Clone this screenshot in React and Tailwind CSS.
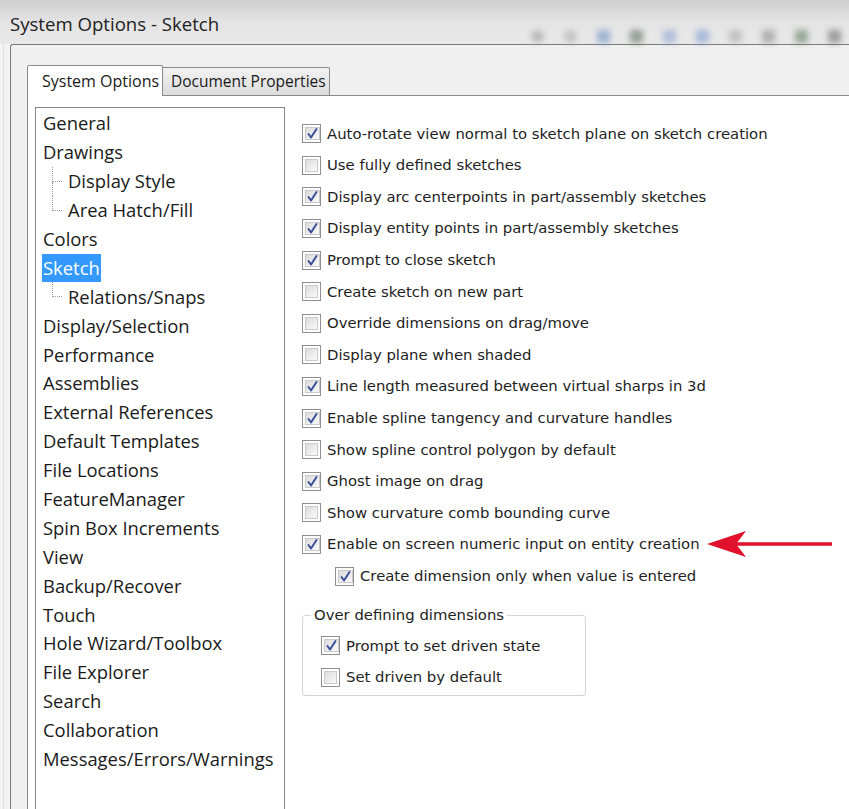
import React from 'react'

const navItems = [
    { label: 'General' },
    { label: 'Drawings' },
    { label: 'Display Style', child: true },
    { label: 'Area Hatch/Fill', child: true, last: true },
    { label: 'Colors' },
    { label: 'Sketch', selected: true },
    { label: 'Relations/Snaps', child: true, last: true },
    { label: 'Display/Selection' },
    { label: 'Performance' },
    { label: 'Assemblies' },
    { label: 'External References' },
    { label: 'Default Templates' },
    { label: 'File Locations' },
    { label: 'FeatureManager' },
    { label: 'Spin Box Increments' },
    { label: 'View' },
    { label: 'Backup/Recover' },
    { label: 'Touch' },
    { label: 'Hole Wizard/Toolbox' },
    { label: 'File Explorer' },
    { label: 'Search' },
    { label: 'Collaboration' },
    { label: 'Messages/Errors/Warnings' },
]

const options = [
    { label: 'Auto-rotate view normal to sketch plane on sketch creation', checked: true },
    { label: 'Use fully defined sketches', checked: false },
    { label: 'Display arc centerpoints in part/assembly sketches', checked: true },
    { label: 'Display entity points in part/assembly sketches', checked: true },
    { label: 'Prompt to close sketch', checked: true },
    { label: 'Create sketch on new part', checked: false },
    { label: 'Override dimensions on drag/move', checked: false },
    { label: 'Display plane when shaded', checked: false },
    { label: 'Line length measured between virtual sharps in 3d', checked: true },
    { label: 'Enable spline tangency and curvature handles', checked: true },
    { label: 'Show spline control polygon by default', checked: false },
    { label: 'Ghost image on drag', checked: true },
    { label: 'Show curvature comb bounding curve', checked: false },
    { label: 'Enable on screen numeric input on entity creation', checked: true },
]

const uiFont = { fontFamily: '"Open Sans", "Noto Sans", sans-serif' }
const optFont = { fontFamily: '"DejaVu Sans", Verdana, sans-serif' }

function Checkbox({ checked }) {
    return (
        <span className="w-[19px] h-[19px] shrink-0 border border-[#8f8f8f] bg-white p-[2px] flex">
            <span className="flex-1 border border-[#c9c9c9] bg-gradient-to-br from-[#dcdcdc] to-[#fafafa] flex items-center justify-center">
                {checked && (
                    <svg width="13" height="13" viewBox="0 0 13 13">
                        <path d="M2.5 7 L5 10.5 L10.5 2" fill="none" stroke="#3b4f9a" strokeWidth="2" strokeLinecap="round" strokeLinejoin="round" />
                    </svg>
                )}
            </span>
        </span>
    )
}

function OptionRow({ label, checked, className = '' }) {
    return (
        <div className={`h-[31.6px] flex items-center gap-[6px] ${className}`}>
            <Checkbox checked={checked} />
            <span className="text-[14.85px] text-[#1e1e1e] whitespace-nowrap" style={optFont}>{label}</span>
        </div>
    )
}

function TreeConnector({ last }) {
    return (
        <div className="w-[10px] ml-[10px] mr-[5px] self-stretch flex flex-col">
            <div className="flex-1 border-l border-b border-dotted border-[#9a9a9a]" />
            <div className={`flex-1 ${last ? '' : 'border-l border-dotted border-[#9a9a9a]'}`} />
        </div>
    )
}

function NavRow({ item }) {
    return (
        <div className="h-[28.9px] flex items-stretch">
            {item.child && <TreeConnector last={item.last} />}
            <span className="flex items-center">
                <span
                    className={`px-[1px] leading-[28px] text-[18.4px] whitespace-nowrap ${item.selected ? 'bg-[#3399ff] text-white' : 'text-[#1a1a1a]'}`}
                    style={uiFont}
                >
                    {item.label}
                </span>
            </span>
        </div>
    )
}

export default function App() {
    return (
        <div className="w-[849px] h-[809px] overflow-hidden relative bg-[#f3f3f3] flex flex-col">
            {/* title bar */}
            <div className="h-[44px] shrink-0 relative bg-gradient-to-b from-[#cfcfcf] via-[#e4e4e4] to-[#e9e9e9] flex items-center pl-[10px]">
                <span className="text-[18.6px] text-[#222] pt-[3px]" style={uiFont}>System Options - Sketch</span>
                <div className="absolute right-[8px] top-[30px] flex gap-[20px] blur-[3px] opacity-60">
                    <span className="w-[13px] h-[13px] rounded-full bg-[#9a9a9a]" />
                    <span className="w-[13px] h-[13px] rounded-full bg-[#a8a8a8]" />
                    <span className="w-[13px] h-[13px] bg-[#6d8fc4]" />
                    <span className="w-[13px] h-[13px] bg-[#5c6a5c]" />
                    <span className="w-[13px] h-[13px] bg-[#8aa3d0]" />
                    <span className="w-[13px] h-[13px] bg-[#7d9ad0]" />
                    <span className="w-[13px] h-[13px] bg-[#aaaaaa]" />
                    <span className="w-[13px] h-[13px] bg-[#8a8a8a]" />
                    <span className="w-[13px] h-[13px] bg-[#5f7a5f]" />
                    <span className="w-[13px] h-[13px] bg-[#6a6a6a]" />
                </div>
            </div>

            <div className="flex-1 flex min-h-0">
                <div className="w-[10px] shrink-0 flex">
                    <div className="w-[3px]" />
                    <div className="w-px bg-[#dedede]" />
                </div>

                {/* dialog frame */}
                <div className="flex-1 flex flex-col border-t border-l border-[#7a7a7a] rounded-tl-[3px] bg-[#f0f0f0] pl-[16px] pt-[19px]">
                    {/* tabs */}
                    <div className="h-[31px] flex items-end relative z-10" style={uiFont}>
                        <div className="w-[136px] h-[31px] -mb-px bg-white border border-b-0 border-[#898989] rounded-t-[2px] pl-[14px] flex items-center text-[16px] text-[#1a1a1a] whitespace-nowrap">
                            System Options
                        </div>
                        <div className="w-[167px] h-[28px] bg-gradient-to-b from-[#f2f2f2] to-[#dcdcdc] border border-l-0 border-b-0 border-[#898989] rounded-tr-[2px] pl-[8px] flex items-center text-[15.5px] text-[#1a1a1a] whitespace-nowrap">
                            Document Properties
                        </div>
                    </div>

                    {/* tab panel */}
                    <div className="flex-1 flex min-h-0 bg-white border-t border-l border-[#898989] pl-[7px] pt-[11px]">
                        {/* category list */}
                        <div className="w-[250px] shrink-0 border border-b-0 border-[#828790] pl-[6px] pt-[1px] flex flex-col">
                            {navItems.map((item) => (
                                <NavRow key={item.label} item={item} />
                            ))}
                        </div>

                        {/* options */}
                        <div className="flex-1 pl-[17px] pt-[11px] flex flex-col relative">
                            {options.map((o) => (
                                <OptionRow key={o.label} label={o.label} checked={o.checked} />
                            ))}
                            <OptionRow
                                label="Create dimension only when value is entered"
                                checked
                                className="pl-[33px]"
                            />

                            <fieldset className="mt-[12px] w-[284px] border border-[#d5d5d5] rounded-[3px] pl-[18px] pt-[4px] pb-[2px]">
                                <legend className="-ml-[10px] px-[3px] text-[14.85px] text-[#1e1e1e]" style={optFont}>
                                    Over defining dimensions
                                </legend>
                                <OptionRow label="Prompt to set driven state" checked />
                                <OptionRow label="Set driven by default" checked={false} />
                            </fieldset>
                        </div>
                    </div>
                </div>
            </div>

            {/* red annotation arrow */}
            <svg className="absolute left-[704px] top-[528px]" width="132" height="32" viewBox="0 0 132 32">
                <line x1="30" y1="16" x2="128" y2="16" stroke="#e3122c" strokeWidth="3.5" />
                <path d="M3 16 L42 3 L32 16 L42 29 Z" fill="#e3122c" />
            </svg>
        </div>
    )
}
